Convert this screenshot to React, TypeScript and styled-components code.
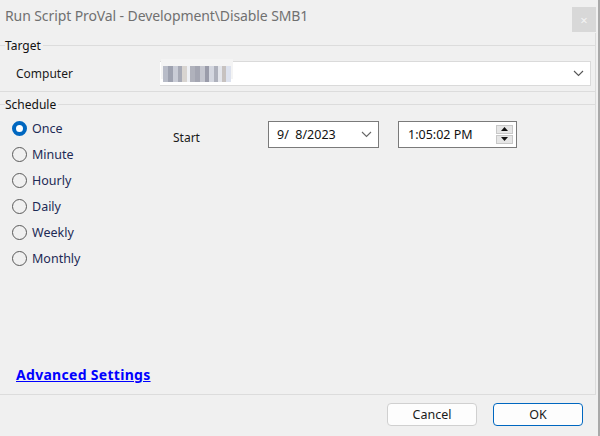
import React from "react";
import styled, { createGlobalStyle } from "styled-components";

const Global = createGlobalStyle`
  html, body { margin: 0; padding: 0; background: #f0f0f0; }
  body { font-family: "Segoe UI", "Noto Sans", "Open Sans", sans-serif; }
`;

const Window = styled.div`
  width: 600px;
  height: 436px;
  box-sizing: border-box;
  background: #f0f0f0;
  border-right: 2px solid #a9a9a9;
  display: flex;
  flex-direction: column;
  overflow: hidden;
`;

const TitleBar = styled.div`
  height: 33px;
  display: flex;
  align-items: flex-start;
  justify-content: space-between;
  padding: 0 2px 0 5px;
`;

const Title = styled.div`
  font-size: 14px;
  color: #707070;
  margin-top: 6px;
  letter-spacing: -0.1px;
`;

const CloseButton = styled.div`
  width: 24px;
  height: 25px;
  margin-top: 7px;
  background: #d8d8d8;
  color: #f4f4f4;
  font-size: 13px;
  display: flex;
  align-items: center;
  justify-content: center;
`;

const Group = styled.div<{ $height: number }>`
  height: ${(p) => p.$height}px;
  margin-right: 2px;
  box-sizing: border-box;
  border-right: 1px solid #dcdcdc;
  border-bottom: 1px solid #dcdcdc;
  display: flex;
  flex-direction: column;
`;

const GroupHeader = styled.div`
  display: flex;
  align-items: center;
  height: 14px;
  margin-top: 5px;
  &::before {
    content: "";
    width: 5px;
    border-top: 1px solid #dcdcdc;
  }
  &::after {
    content: "";
    flex: 1;
    border-top: 1px solid #dcdcdc;
    margin-left: 2px;
  }
`;

const GroupLabel = styled.span`
  font-size: 12px;
  color: #111;
`;

const Row = styled.div`
  display: flex;
  align-items: center;
`;

const FieldLabel = styled.span<{ $width: number; $offset?: number }>`
  width: ${(p) => p.$width}px;
  font-size: 12px;
  color: #1a1a1a;
  flex-shrink: 0;
  padding-top: ${(p) => p.$offset ?? 0}px;
`;

const ComboBox = styled.div`
  flex: 1;
  height: 25px;
  margin-right: 4px;
  box-sizing: border-box;
  background: #fff;
  border: 1px solid #dadada;
  border-left: none;
  display: flex;
  align-items: center;
  justify-content: space-between;
  padding: 0 6px 0 3px;
  position: relative;
`;

const Blur = styled.div`
  display: flex;
  height: 16px;
  align-items: stretch;
  margin-left: 0;
  box-shadow: 0 -5px 0 2px #f4f4f4;
`;

const BlurCell = styled.div<{ $c: string; $w: number }>`
  width: ${(p) => p.$w}px;
  background: ${(p) => p.$c};
  filter: blur(0.6px);
`;

const Chevron = ({ color = "#555" }: { color?: string }) => (
  <svg width="11" height="7" viewBox="0 0 11 7">
    <path d="M1 1 L5.5 5.5 L10 1" fill="none" stroke={color} strokeWidth="1.1" />
  </svg>
);

const TargetBody = styled.div`
  padding: 9px 0 0 16px;
`;

const ScheduleBody = styled.div`
  display: flex;
  padding: 10px 0 0 12px;
  flex: 1;
  position: relative;
`;

const RadioList = styled.div`
  display: flex;
  flex-direction: column;
  gap: 11px;
  width: 161px;
`;

const RadioRow = styled.label`
  display: flex;
  align-items: center;
  height: 15px;
  font-size: 12.5px;
  color: #1d2a55;
`;

const RadioCircle = styled.span<{ $checked: boolean }>`
  width: 15px;
  height: 15px;
  box-sizing: border-box;
  border-radius: 50%;
  margin-right: 5px;
  flex-shrink: 0;
  ${(p) =>
    p.$checked
      ? `background: #fff; border: 4px solid #0067c0;`
      : `background: #f0f0f0; border: 1px solid #5a5a5a;`}
`;

const StartArea = styled.div`
  display: flex;
  align-items: center;
  height: 26px;
  margin-top: 0;
`;

const DateBox = styled.div`
  width: 111px;
  height: 27px;
  box-sizing: border-box;
  background: #fff;
  border: 1px solid #7a7a7a;
  display: flex;
  align-items: center;
  justify-content: space-between;
  padding: 0 6px 0 8px;
  font-size: 12.5px;
  color: #111;
  margin-right: 19px;
`;

const TimeBox = styled.div`
  width: 119px;
  height: 27px;
  box-sizing: border-box;
  background: #fff;
  border: 1px solid #7a7a7a;
  display: flex;
  align-items: center;
  justify-content: space-between;
  padding: 0 3px 0 9px;
  font-size: 12.5px;
  color: #111;
`;

const Spinner = styled.div`
  display: flex;
  flex-direction: column;
  gap: 1px;
`;

const SpinBtn = styled.div`
  width: 17px;
  height: 9px;
  background: #e6e6e6;
  border: 1px solid #c8c8c8;
  box-sizing: border-box;
  display: flex;
  align-items: center;
  justify-content: center;
`;

const Link = styled.a`
  position: absolute;
  left: 16px;
  bottom: 10px;
  font-size: 14px;
  letter-spacing: 0.3px;
  font-weight: bold;
  color: #0000ff;
  text-decoration: underline;
`;

const Footer = styled.div`
  display: flex;
  justify-content: flex-end;
  gap: 16px;
  padding: 8px 15px 0 0;
`;

const Button = styled.button<{ $primary?: boolean }>`
  width: 90px;
  height: 23px;
  box-sizing: border-box;
  border-radius: 4px;
  background: #fdfdfd;
  border: 1px solid ${(p) => (p.$primary ? "#0067c0" : "#d0d0d0")};
  font-family: inherit;
  font-size: 12.5px;
  color: #1a1a1a;
  padding: 0;
`;

const blurCells: [string, number][] = [
  ["#b8bcc8", 5],
  ["#9ea2b0", 5],
  ["#c9ccd6", 5],
  ["#a7aab6", 4],
  ["#d8d4d0", 5],
  ["#eef0f4", 3],
  ["#b0b2bc", 5],
  ["#a4a6b2", 5],
  ["#c4c6cf", 5],
  ["#9a9caa", 4],
  ["#d4d7e0", 5],
  ["#aeb1bc", 4],
  ["#e4e6ec", 4],
  ["#c7c2c0", 4],
  ["#dde2ee", 5],
];

const radios = ["Once", "Minute", "Hourly", "Daily", "Weekly", "Monthly"];

export default function App() {
  return (
    <>
      <Global />
      <Window>
        <TitleBar>
          <Title>Run Script ProVal - Development\Disable SMB1</Title>
          <CloseButton>×</CloseButton>
        </TitleBar>
        <Group $height={59}>
          <GroupHeader>
            <GroupLabel>Target</GroupLabel>
          </GroupHeader>
          <TargetBody>
            <Row>
              <FieldLabel $width={144}>Computer</FieldLabel>
              <ComboBox>
                <Blur>
                  {blurCells.map(([c, w], i) => (
                    <BlurCell key={i} $c={c} $w={w} />
                  ))}
                </Blur>
                <Chevron />
              </ComboBox>
            </Row>
          </TargetBody>
        </Group>
        <Group $height={303}>
          <GroupHeader>
            <GroupLabel>Schedule</GroupLabel>
          </GroupHeader>
          <ScheduleBody>
            <RadioList>
              {radios.map((r, i) => (
                <RadioRow key={r}>
                  <RadioCircle $checked={i === 0} />
                  {r}
                </RadioRow>
              ))}
            </RadioList>
            <div>
              <StartArea>
                <FieldLabel $width={95} $offset={6}>Start</FieldLabel>
                <DateBox>
                  <span>9/&nbsp;&nbsp;8/2023</span>
                  <Chevron color="#666" />
                </DateBox>
                <TimeBox>
                  <span>1:05:02 PM</span>
                  <Spinner>
                    <SpinBtn>
                      <svg width="7" height="4" viewBox="0 0 7 4">
                        <path d="M0 4 L3.5 0 L7 4 Z" fill="#111" />
                      </svg>
                    </SpinBtn>
                    <SpinBtn>
                      <svg width="7" height="4" viewBox="0 0 7 4">
                        <path d="M0 0 L3.5 4 L7 0 Z" fill="#111" />
                      </svg>
                    </SpinBtn>
                  </Spinner>
                </TimeBox>
              </StartArea>
            </div>
            <Link>Advanced Settings</Link>
          </ScheduleBody>
        </Group>
        <Footer>
          <Button>Cancel</Button>
          <Button $primary>OK</Button>
        </Footer>
      </Window>
    </>
  );
}
